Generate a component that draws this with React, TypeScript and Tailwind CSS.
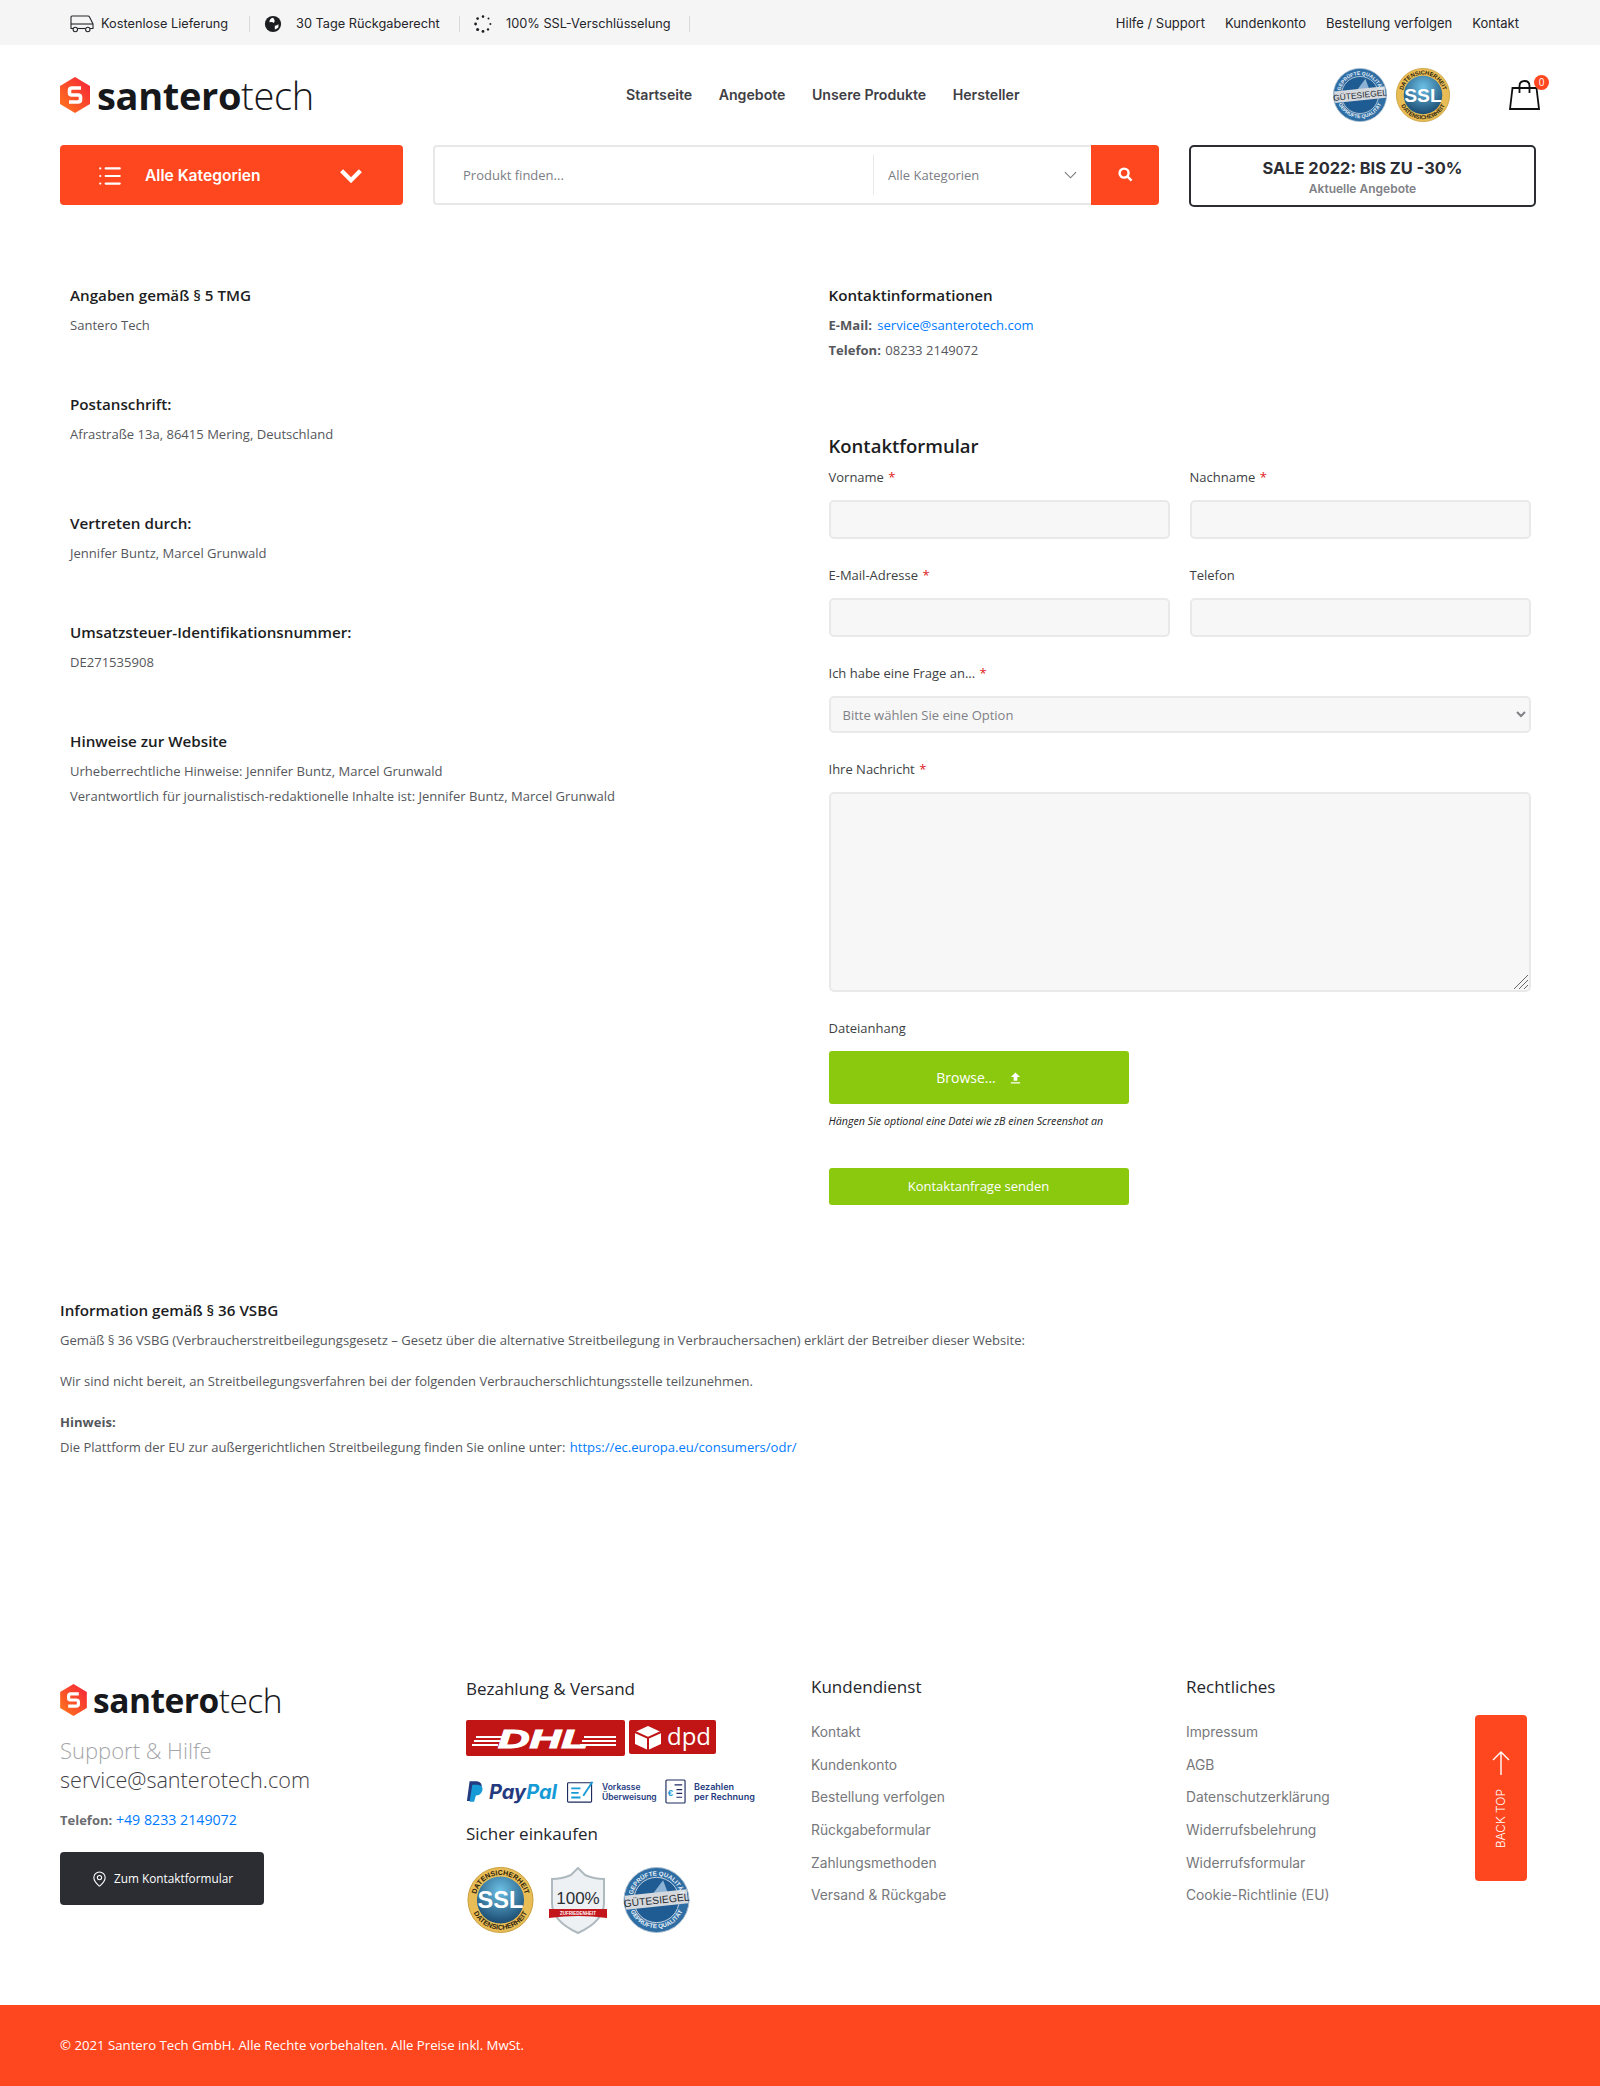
import React from "react";
import { List, MapPin } from "lucide-react";

function Logo({ size }: { size: "lg" | "sm" }) {
  const lg = size === "lg";
  return (
    <div className={lg ? "flex items-center gap-[7px]" : "flex items-center gap-[6px]"}>
      <svg viewBox="0 0 30 36" className={lg ? "w-[30px] h-[36px]" : "w-[27px] h-[32px]"}>
        <defs>
          <linearGradient id={"hex" + size} x1="0" y1="1" x2="1" y2="0">
            <stop offset="0" stopColor="#ff7a1a" />
            <stop offset="1" stopColor="#f5203a" />
          </linearGradient>
        </defs>
        <path d="M15 0 L30 9 V27 L15 36 L0 27 V9 Z" fill={"url(#hex" + size + ")"} />
        <path d="M21 11 H12 Q9.5 11 9.5 13.5 V16 Q9.5 18 12 18 H18 Q20.5 18 20.5 20 V22.5 Q20.5 25 18 25 H9" fill="none" stroke="#fff" strokeWidth="3.6" />
      </svg>
      <div className={lg ? "text-[38px] leading-[36px] tracking-[-0.35px] text-[#17181c] font-['Open_Sans',sans-serif]" : "text-[33.5px] leading-[32px] tracking-[-0.5px] text-[#17181c] font-['Open_Sans',sans-serif]"}>
        <span className="font-bold">santero</span>
        <span className="font-light">tech</span>
      </div>
    </div>
  );
}

function SslSeal({ className }: { className: string }) {
  return (
    <svg viewBox="0 0 70 70" className={className}>
      <defs>
        <radialGradient id="sslb" cx="0.5" cy="0.3" r="0.8">
          <stop offset="0" stopColor="#6cc0e6" />
          <stop offset="1" stopColor="#0f3a60" />
        </radialGradient>
        <path id="sslarc1" d="M8.5 35 A26.5 26.5 0 0 1 61.5 35" />
        <path id="sslarc2" d="M3.5 35 A31.5 31.5 0 0 0 66.5 35" />
      </defs>
      <circle cx="35" cy="35" r="34.5" fill="#e9bd55" stroke="#c79a35" />
      <circle cx="35" cy="35" r="25" fill="url(#sslb)" />
      <text fontFamily="Liberation Sans" fontSize="7.5" fontWeight="700" fill="#2e2410">
        <textPath href="#sslarc1" startOffset="50%" textAnchor="middle">DATENSICHERHEIT</textPath>
      </text>
      <text fontFamily="Liberation Sans" fontSize="7.5" fontWeight="700" fill="#2e2410">
        <textPath href="#sslarc2" startOffset="50%" textAnchor="middle">DATENSICHERHEIT</textPath>
      </text>
      <text x="35" y="44" textAnchor="middle" fontFamily="Liberation Sans" fontWeight="700" fontSize="25" fill="#fff">SSL</text>
    </svg>
  );
}

function GuteSeal({ className }: { className: string }) {
  return (
    <svg viewBox="0 0 70 70" className={className}>
      <defs>
        <path id="gutearc1" d="M9 35 A26 26 0 0 1 61 35" />
        <path id="gutearc2" d="M5 35 A30 30 0 0 0 65 35" />
      </defs>
      <circle cx="35" cy="35" r="34.5" fill="#2f6ea5" stroke="#a9bccd" />
      <circle cx="35" cy="35" r="24" fill="#1f5c94" stroke="#cdd8e2" />
      <path d="M42 14 L30 30 H48 Z" fill="#8cb3d6" />
      <rect x="2" y="27" width="66" height="15" fill="#d5d9dd" transform="rotate(-6 35 35)" />
      <text fontFamily="Liberation Sans" fontSize="6.5" fontWeight="700" fill="#e8f1f8">
        <textPath href="#gutearc1" startOffset="50%" textAnchor="middle">GEPRÜFTE QUALITÄT</textPath>
      </text>
      <text fontFamily="Liberation Sans" fontSize="6.5" fontWeight="700" fill="#e8f1f8">
        <textPath href="#gutearc2" startOffset="50%" textAnchor="middle">GEPRÜFTE QUALITÄT</textPath>
      </text>
      <text x="35" y="39" textAnchor="middle" transform="rotate(-6 35 35)" fontFamily="Liberation Sans" fontWeight="400" fontSize="11" fill="#2b2f35">GÜTESIEGEL</text>
    </svg>
  );
}

function Shield({ className }: { className: string }) {
  return (
    <svg viewBox="0 0 60 68" className={className}>
      <path d="M30 1 L37 8 Q46 12 56 12 V36 Q56 54 30 66 Q4 54 4 36 V12 Q14 12 23 8 Z" fill="#eef1f3" stroke="#aeb9bf" strokeWidth="2" />
      <text x="30" y="37" textAnchor="middle" fontFamily="Liberation Sans" fontSize="17" fill="#2b2f35">100%</text>
      <path d="M1 42 H59 V51 Q30 47 1 51 Z" fill="#c3161c" />
      <text x="30" y="48" textAnchor="middle" fontFamily="Liberation Sans" fontSize="4.5" fontWeight="700" fill="#fff">ZUFRIEDENHEIT</text>
    </svg>
  );
}

const Label = ({ t, req }: { t: string; req?: boolean }) => (
  <div className="text-[13px] leading-5 text-[#3d3f44]">
    {t} {req && <span className="ml-[1px] text-[#e02020]">*</span>}
  </div>
);

const Input = () => (
  <input className="mt-[13px] block w-full h-[39px] rounded-[5px] border-2 border-[#e9e9e9] bg-[#f7f7f7]" />
);

const links3 = ["Kontakt", "Kundenkonto", "Bestellung verfolgen", "Rückgabeformular", "Zahlungsmethoden", "Versand & Rückgabe"];
const links4 = ["Impressum", "AGB", "Datenschutzerklärung", "Widerrufsbelehrung", "Widerrufsformular", "Cookie-Richtlinie (EU)"];

const H = ({ children }: { children: React.ReactNode }) => (
  <h3 className="text-[15.2px] leading-6 font-semibold text-[#1c1d22]">{children}</h3>
);
const P = ({ children }: { children: React.ReactNode }) => (
  <p className="text-[13.05px] leading-[25px] text-[#55575c]">{children}</p>
);

export default function App() {
  return (
    <div className="w-[1600px] h-[2086px] bg-white overflow-hidden font-['Open_Sans',sans-serif]">
      {/* top bar */}
      <div className="h-[45px] pt-[2px] bg-[#f5f5f5] flex items-center pl-[70px] pr-[81px] font-['Inter',sans-serif] text-[12.75px] text-[#25262b]">
        <svg viewBox="0 0 24 18" className="w-[24px] h-[18px]" fill="none" stroke="#25262b" strokeWidth="1.1">
          <path d="M3 13.5 H1 V2 Q1 1 2 1 H18 Q19 1 19.5 2 L23 9 V13.5 H20" />
          <path d="M7.5 13.5 H15.5" />
          <path d="M1 9 H23" />
          <circle cx="5.3" cy="14.5" r="2.2" />
          <circle cx="17.8" cy="14.5" r="2.2" />
        </svg>
        <span className="ml-[7px] w-[128px] whitespace-nowrap">Kostenlose Lieferung</span>
        <span className="ml-[20px] w-px h-[16px] bg-[#d9d9d9]" />
        <svg viewBox="0 0 20 20" className="ml-[14px] w-[18px] h-[18px]">
          <circle cx="10" cy="10" r="9" fill="#1d1e22" />
          <path d="M10 3 Q6 4 6 8 Q9 7 11 9 Q13 6 10 3 M12 12 Q15 12 16 10 L16 14 Q14 16 12 16 Z" fill="#fff" />
        </svg>
        <span className="ml-[14px] w-[143px] whitespace-nowrap">30 Tage Rückgaberecht</span>
        <span className="ml-[20px] w-px h-[16px] bg-[#d9d9d9]" />
        <svg viewBox="0 0 18 18" className="ml-[14px] w-[18px] h-[18px]" fill="#1d1e22">
          <circle cx="9" cy="1.6" r="1.3" /><circle cx="14.5" cy="3.6" r="1" /><circle cx="16.4" cy="9" r="1" />
          <circle cx="14" cy="14.4" r="1.2" /><circle cx="9" cy="16.4" r="1.4" /><circle cx="3.6" cy="14.4" r="1.5" />
          <circle cx="1.6" cy="9" r="1.4" /><circle cx="3.6" cy="3.6" r="1.3" />
        </svg>
        <span className="ml-[14px] w-[163px] whitespace-nowrap">100% SSL-Verschlüsselung</span>
        <span className="ml-[20px] w-px h-[16px] bg-[#d9d9d9]" />
        <div className="ml-auto flex gap-[20px] text-[13px]">
          <span>Hilfe / Support</span>
          <span>Kundenkonto</span>
          <span>Bestellung verfolgen</span>
          <span>Kontakt</span>
        </div>
      </div>

      {/* header */}
      <div className="h-[100px] flex items-center pl-[60px]">
        <div className="w-[566px] shrink-0"><Logo size="lg" /></div>
        <nav className="w-[392px] shrink-0 flex gap-[26.5px] font-['Inter',sans-serif] text-[14.15px] font-semibold text-[#3f4045] whitespace-nowrap">
          <span>Startseite</span>
          <span>Angebote</span>
          <span>Unsere Produkte</span>
          <span>Hersteller</span>
        </nav>
        <div className="ml-[315px] flex gap-[9px]">
          <GuteSeal className="w-[54px] h-[56px]" />
          <SslSeal className="w-[54px] h-[56px]" />
        </div>
        <div className="relative ml-[59px] w-[31px] h-[30px]">
          <svg viewBox="0 0 31 30" className="w-[31px] h-[30px]" fill="none" stroke="#111" strokeWidth="1.8">
            <path d="M3.5 8 H27.5 L30 29 H1 Z" />
            <path d="M10.5 13 V6 Q10.5 1 15.5 1 Q20.5 1 20.5 6 V13" />
          </svg>
          <span className="absolute -top-[5px] left-[25px] w-[15px] h-[15px] rounded-full bg-[#ff471f] text-white text-[10px] leading-[15px] text-center">0</span>
        </div>
      </div>

      {/* search row */}
      <div className="flex items-start pl-[60px]">
        <div className="w-[343px] h-[60px] pt-[2px] rounded-[4px] bg-[#ff471f] text-white flex items-center pl-[37px]">
          <List className="w-[26px] h-[26px]" strokeWidth={2} />
          <span className="ml-[22px] w-[118px] text-[15.6px] font-semibold font-['Inter',sans-serif] whitespace-nowrap">Alle Kategorien</span>
          <svg viewBox="0 0 24 16" className="ml-[76px] -mt-[2px] w-[24px] h-[15px]" fill="none" stroke="#fff" strokeWidth="4.5">
            <path d="M2 3 L12 13 L22 3" />
          </svg>
        </div>
        <div className="ml-[30px] w-[726px] h-[60px] flex">
          <div className="flex-1 flex items-center rounded-l-[4px] border-2 border-r-0 border-[#e8e8e8] bg-white">
            <input placeholder="Produkt finden..." className="mt-[2px] pl-[28px] w-[438px] text-[13px] outline-none placeholder:text-[#7b7d85]" />
            <span className="w-px h-[40px] bg-[#e8e8e8]" />
            <span className="mt-[2px] ml-[14px] w-[176px] text-[13px] text-[#7b7d85]">Alle Kategorien</span>
            <svg viewBox="0 0 14 8" className="w-[13px] h-[8px]" fill="none" stroke="#777" strokeWidth="1.2"><path d="M1 1 L7 7 L13 1" /></svg>
          </div>
          <div className="w-[68px] bg-[#ff471f] rounded-r-[4px] flex items-center justify-center">
            <svg viewBox="0 0 16 16" className="w-[15px] h-[15px] -mt-[1px]" fill="none" stroke="#fff" strokeWidth="2.6">
              <circle cx="6.5" cy="6.5" r="4.8" /><path d="M10 10 L14.5 14.5" />
            </svg>
          </div>
        </div>
        <div className="ml-[30px] w-[347px] h-[62px] rounded-[5px] border-2 border-[#2b2d33] flex flex-col items-center font-['Inter',sans-serif]">
          <div className="mt-[10px] text-[16.4px] leading-[22px] font-bold text-[#2b2d33]">SALE 2022: BIS ZU -30%</div>
          <div className="text-[12px] leading-[20px] font-semibold text-[#808186]">Aktuelle Angebote</div>
        </div>
      </div>

      {/* main */}
      <div className="pt-[76px] pl-[70px] grid grid-cols-[758.5px_702px]">
        <div className="flex flex-col">
          <div className="mb-[54px]"><H>Angaben gemäß § 5 TMG</H><div className="mt-[6px]"><P>Santero Tech</P></div></div>
          <div className="mb-[64px]"><H>Postanschrift:</H><div className="mt-[6px]"><P>Afrastraße 13a, 86415 Mering, Deutschland</P></div></div>
          <div className="mb-[54px]"><H>Vertreten durch:</H><div className="mt-[6px]"><P>Jennifer Buntz, Marcel Grunwald</P></div></div>
          <div className="mb-[54px]"><H>Umsatzsteuer-Identifikationsnummer:</H><div className="mt-[6px]"><P>DE271535908</P></div></div>
          <div>
            <H>Hinweise zur Website</H>
            <div className="mt-[6px]">
              <P>Urheberrechtliche Hinweise: Jennifer Buntz, Marcel Grunwald</P>
              <P>Verantwortlich für journalistisch-redaktionelle Inhalte ist: Jennifer Buntz, Marcel Grunwald</P>
            </div>
          </div>
        </div>
        <div>
          <H>Kontaktinformationen</H>
          <div className="mt-[6px]">
            <P><b className="font-bold">E-Mail:</b> <span className="ml-[2px] text-[#007bff]">service@santerotech.com</span></P>
            <P><b className="font-bold">Telefon:</b> <span className="ml-[1px]">08233 2149072</span></P>
          </div>
          <h2 className="mt-[69px] text-[18.5px] leading-7 font-semibold text-[#1c1d22]">Kontaktformular</h2>
          <div className="mt-[7px] grid grid-cols-2 gap-x-[20px] gap-y-[26px]">
            <div><Label t="Vorname" req /><Input /></div>
            <div><Label t="Nachname" req /><Input /></div>
            <div><Label t="E-Mail-Adresse" req /><Input /></div>
            <div><Label t="Telefon" /><Input /></div>
          </div>
          <div className="mt-[26px]">
            <Label t="Ich habe eine Frage an..." req />
            <select className="mt-[13px] block w-full h-[37px] pl-[8px] rounded-[5px] border-2 border-[#e9e9e9] bg-[#f7f7f7] text-[13px] text-[#808186]">
              <option>Bitte wählen Sie eine Option</option>
            </select>
          </div>
          <div className="mt-[26px]">
            <Label t="Ihre Nachricht" req />
            <div className="relative mt-[13px]">
              <textarea className="block w-full h-[200px] resize-none rounded-[5px] border-2 border-[#e9e9e9] bg-[#f7f7f7]" />
              <svg viewBox="0 0 15 15" className="absolute bottom-[3px] right-[3px] w-[15px] h-[15px]" stroke="#666" strokeWidth="1">
                <path d="M1 15 L15 1 M6 15 L15 6 M11 15 L15 11" />
              </svg>
            </div>
          </div>
          <div className="mt-[26px]"><Label t="Dateianhang" /></div>
          <div className="mt-[13px] w-[300px] h-[53px] rounded-[3px] bg-[#8bc90f] text-white text-[14px] flex items-center justify-center gap-[14px]">
            Browse...
            <svg viewBox="0 0 12 12" className="w-[11px] h-[12px]" fill="#fff"><path d="M6 0 L11 5 H8 V9 H4 V5 H1 Z M1 10.5 H11 V12 H1 Z" /></svg>
          </div>
          <div className="mt-[9px] text-[10.7px] leading-4 italic text-[#222]">Hängen Sie optional eine Datei wie zB einen Screenshot an</div>
          <div className="mt-[39px] w-[300px] h-[37px] rounded-[3px] bg-[#8bc90f] text-white text-[13px] flex items-center justify-center">Kontaktanfrage senden</div>
        </div>
      </div>

      {/* info */}
      <div className="mt-[93px] pl-[60px]">
        <H>Information gemäß § 36 VSBG</H>
        <div className="mt-[6px]"><P>Gemäß § 36 VSBG (Verbraucherstreitbeilegungsgesetz – Gesetz über die alternative Streitbeilegung in Verbrauchersachen) erklärt der Betreiber dieser Website:</P></div>
        <div className="mt-[16px]"><P>Wir sind nicht bereit, an Streitbeilegungsverfahren bei der folgenden Verbraucherschlichtungsstelle teilzunehmen.</P></div>
        <div className="mt-[16px]">
          <P><b className="font-bold">Hinweis:</b></P>
          <P>Die Plattform der EU zur außergerichtlichen Streitbeilegung finden Sie online unter: <span className="ml-[1px] text-[#007bff]">https://ec.europa.eu/consumers/odr/</span></P>
        </div>
      </div>

      {/* footer */}
      <div className="mt-[215px] pl-[60px] h-[330px] grid grid-cols-[406px_345px_375px_289px_52px]">
        <div>
          <div className="mt-[9px]"><Logo size="sm" /></div>
          <div className="mt-[19px] text-[22px] leading-[30px] text-[#a5a6aa] font-light">Support &amp; Hilfe</div>
          <div className="text-[21.6px] leading-[30px] text-[#3f4045] font-light">service@santerotech.com</div>
          <div className="mt-[15px] text-[14.2px] leading-5 text-[#007bff]"><b className="text-[13px] font-bold text-[#6b6c70]">Telefon:</b> +49 8233 2149072</div>
          <div className="mt-[22px] w-[204px] h-[53px] rounded-[4px] bg-[#2b2d33] text-white text-[11.8px] flex items-center justify-center gap-[6px]">
            <MapPin className="w-[17px] h-[18px]" strokeWidth={1.5} />
            Zum Kontaktformular
          </div>
        </div>
        <div>
          <div className="mt-[2px] text-[17px] leading-6 text-[#25262b]">Bezahlung &amp; Versand</div>
          <div className="mt-[19px] flex gap-[4px] items-start">
            <svg viewBox="0 0 159 36" className="w-[159px] h-[36px]">
              <rect width="159" height="36" rx="2" fill="#c01514" />
              <path d="M10 17 H36 M8 21 H34 M6 25 H32 M118 17 H150 M116 21 H150 M114 25 H150" stroke="#fff" strokeWidth="1.8" />
              <text x="32" y="28" textLength="90" lengthAdjust="spacingAndGlyphs" fontFamily="Liberation Sans" fontWeight="700" fontStyle="italic" fontSize="25" fill="#fff" stroke="#fff" strokeWidth="1">DHL</text>
            </svg>
            <svg viewBox="0 0 87 34" className="w-[87px] h-[34px]">
              <rect width="87" height="34" rx="2" fill="#c01514" />
              <path d="M19 6 L32 12 V24 L19 30 L6 24 V12 Z" fill="#fff" />
              <path d="M19 18 V30 M6 12 L19 18 L32 12" stroke="#c01514" strokeWidth="2" fill="none" />
              <text x="60" y="25" textAnchor="middle" fontFamily="Open Sans" fontSize="24" fill="#fff">dpd</text>
            </svg>
          </div>
          <div className="mt-[23px] h-[25px] flex items-center">
            <svg viewBox="0 0 20 25" className="w-[18px] h-[23px]">
              <path d="M4 1 H12 Q19 2 17 9 Q15 14 9 14 L7 23 H1 Z" fill="#253b80" />
              <path d="M7 5 H13 Q20 6 18 12 Q16 17 11 17 L9 24 H4 Z" fill="#179bd7" />
            </svg>
            <span className="ml-[5px] w-[68px] text-[20px] font-bold italic text-[#253b80] font-['Inter',sans-serif] leading-none">Pay<span className="text-[#179bd7]">Pal</span></span>
            <svg viewBox="0 0 30 26" className="ml-[9px] w-[29px] h-[24px]" fill="none" stroke="#1a2a5e" strokeWidth="1.2">
              <rect x="1" y="3" width="26" height="21" rx="1" />
              <path d="M5 9 H15 M5 14 H13 M5 19 H15" stroke="#179bd7" strokeWidth="2" />
              <path d="M18 17 L28 2" stroke="#179bd7" strokeWidth="2" />
            </svg>
            <span className="ml-[7px] w-[55px] text-[8.5px] leading-[10px] font-semibold text-[#253b80] font-['Inter',sans-serif] whitespace-nowrap">Vorkasse<br />Überweisung</span>
            <svg viewBox="0 0 22 26" className="ml-[8px] w-[21px] h-[25px]" fill="none" stroke="#1a2a5e" strokeWidth="1.2">
              <rect x="1" y="1" width="20" height="24" rx="1" />
              <path d="M10 6 H18 M12 11 H18 M12 15 H18 M12 19 H18" />
              <text x="3" y="18" fontSize="10" fontFamily="Liberation Sans" fontWeight="700" fill="#179bd7" stroke="none">€</text>
            </svg>
            <span className="ml-[8px] text-[9px] leading-[10px] font-semibold text-[#253b80] font-['Inter',sans-serif] whitespace-nowrap">Bezahlen<br />per Rechnung</span>
          </div>
          <div className="mt-[18px] text-[17px] leading-6 text-[#25262b]">Sicher einkaufen</div>
          <div className="mt-[21px] flex items-start">
            <SslSeal className="w-[69px] h-[66px]" />
            <Shield className="ml-[13px] w-[60px] h-[68px]" />
            <GuteSeal className="ml-[15px] w-[67px] h-[66px]" />
          </div>
        </div>
        <div>
          <div className="text-[17px] leading-6 text-[#25262b]">Kundendienst</div>
          <div className="mt-[23px] flex flex-col gap-[12.7px] font-['Inter',sans-serif] text-[13.8px] leading-5 text-[#77787c]">
            {links3.map((l) => <span key={l}>{l}</span>)}
          </div>
        </div>
        <div>
          <div className="text-[17px] leading-6 text-[#25262b]">Rechtliches</div>
          <div className="mt-[23px] flex flex-col gap-[12.7px] font-['Inter',sans-serif] text-[13.8px] leading-5 text-[#77787c]">
            {links4.map((l) => <span key={l}>{l}</span>)}
          </div>
        </div>
        <div className="mt-[40px] h-[166px] rounded-[4px] bg-[#ff471f] flex flex-col items-center pt-[36px] text-white">
          <svg viewBox="0 0 18 24" className="w-[18px] h-[24px]" fill="none" stroke="#fff" strokeWidth="1.4">
            <path d="M9 24 V1 M1 9 L9 1 L17 9" />
          </svg>
          <span className="mt-[14px] rotate-180 [writing-mode:vertical-rl] text-[12px] font-['Inter',sans-serif] font-light leading-none">BACK TOP</span>
        </div>
      </div>

      {/* bottom */}
      <div className="h-[82px] bg-[#ff471f] pl-[60px] flex items-center text-white text-[13.2px]">
        © 2021 Santero Tech GmbH. Alle Rechte vorbehalten. Alle Preise inkl. MwSt.
      </div>
    </div>
  );
}
